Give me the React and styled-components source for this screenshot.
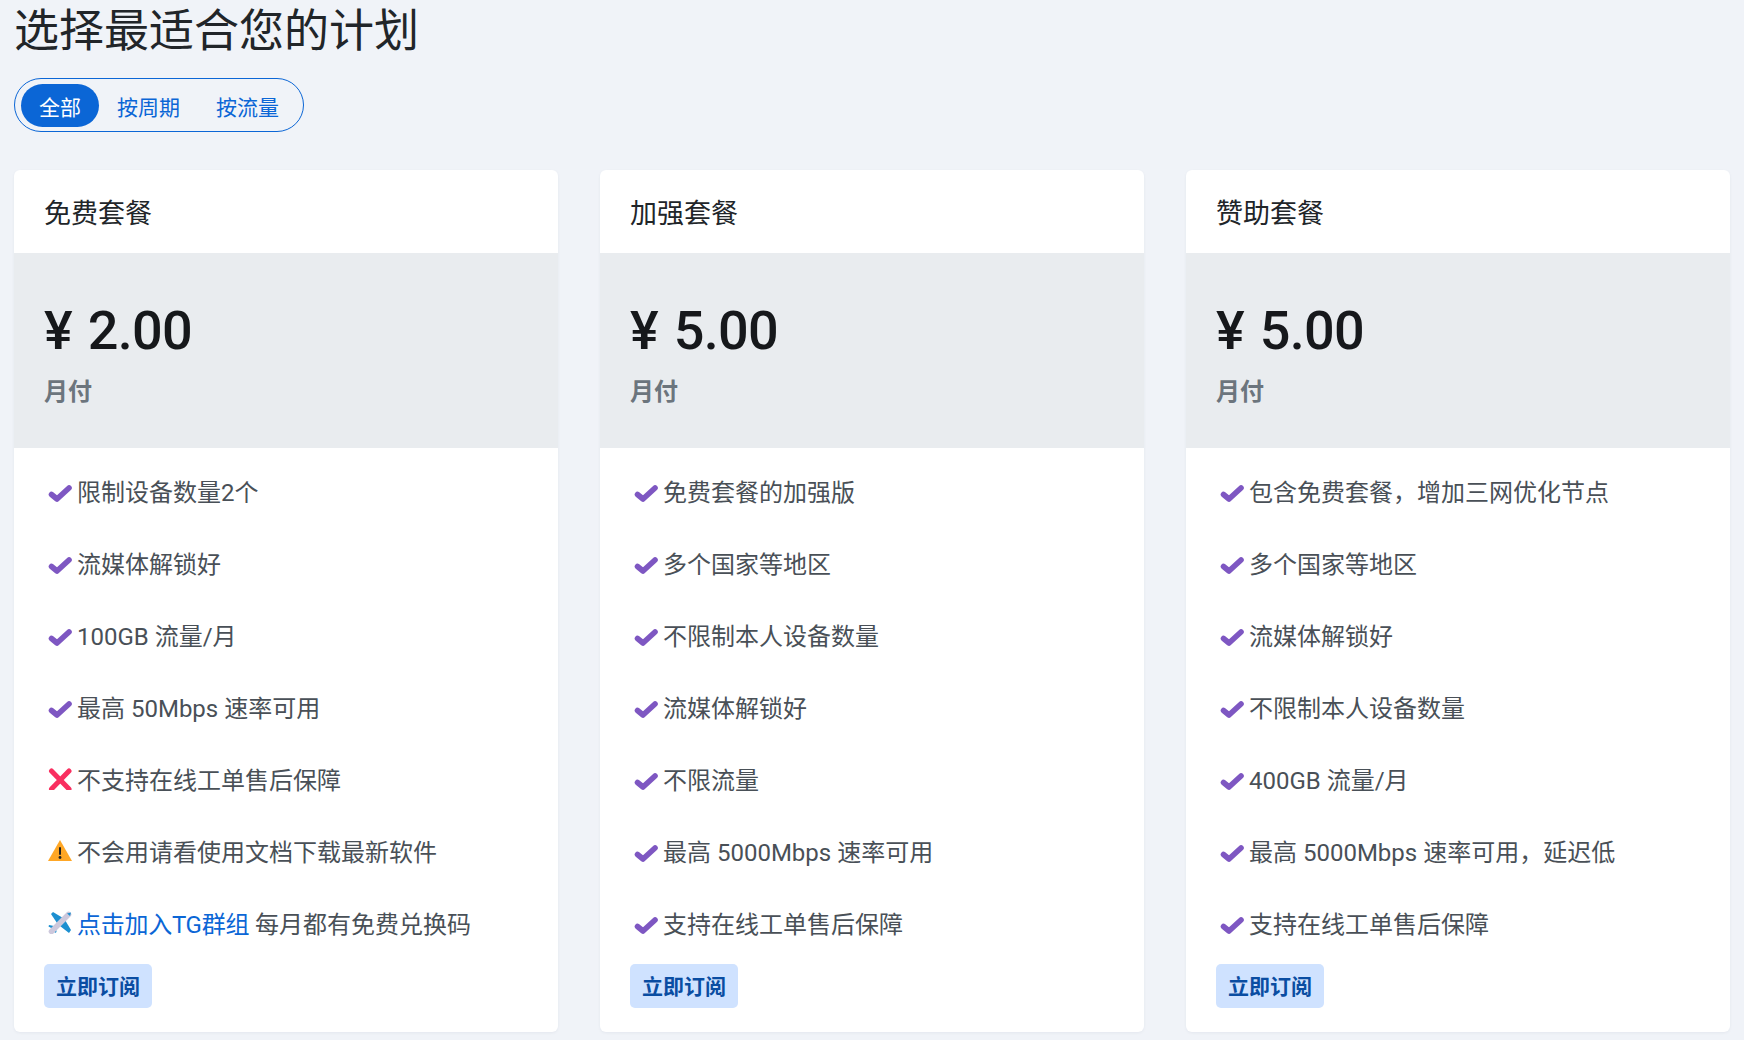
import React from 'react';
import styled, { createGlobalStyle } from 'styled-components';

const GlobalStyle = createGlobalStyle`
  html, body {
    margin: 0;
    padding: 0;
    background: #f0f3f8;
    font-family: Roboto, "Noto Sans CJK SC", sans-serif;
  }
`;

const Page = styled.div`
  width: 1744px;
  height: 1040px;
  box-sizing: border-box;
  padding: 5px 14px 8px;
  overflow: hidden;
`;

const Title = styled.h1`
  margin: 0 0 19px;
  font-size: 45px;
  line-height: 54px;
  font-weight: 400;
  color: #212529;
`;

const Filter = styled.div`
  display: inline-flex;
  align-items: center;
  box-sizing: border-box;
  height: 54px;
  padding: 0 6px;
  border: 1px solid #0b66d6;
  border-radius: 27px;
`;

const FilterItem = styled.button`
  height: 43px;
  padding: 1px 18px 0;
  border: none;
  border-radius: 22px;
  font: inherit;
  font-size: 21px;
  color: ${props => (props.$active ? '#fff' : '#0b66d6')};
  background: ${props => (props.$active ? '#0b66d6' : 'transparent')};
`;

const Grid = styled.div`
  display: grid;
  grid-template-columns: repeat(3, 544px);
  column-gap: 42px;
  margin-top: 38px;
`;

const Card = styled.div`
  height: 862px;
  background: #fff;
  border-radius: 6px;
  box-shadow: 0 1px 3px rgba(30, 50, 90, 0.06);
  overflow: hidden;
`;

const CardHeader = styled.div`
  height: 83px;
  box-sizing: border-box;
  padding: 0 30px;
  display: flex;
  align-items: center;
  font-size: 27px;
  color: #212529;
`;

const PriceBand = styled.div`
  height: 195px;
  box-sizing: border-box;
  padding: 42px 30px 0;
  background: #e9ecef;
`;

const Price = styled.div`
  font-size: 54px;
  line-height: 72px;
  font-weight: 500;
  letter-spacing: -0.7px;
  word-spacing: 3px;
  color: #16181b;
`;

const Period = styled.div`
  margin-top: 9px;
  font-size: 24px;
  line-height: 32px;
  font-weight: 700;
  color: #6c757d;
`;

const Features = styled.ul`
  list-style: none;
  margin: 0;
  padding: 6px 30px 0;
`;

const Feature = styled.li`
  display: flex;
  align-items: center;
  height: 72px;
  font-size: 24px;
  color: #495057;
  white-space: pre;
`;

const IconBox = styled.span`
  display: inline-flex;
  flex: none;
  margin: 0 5px 0 4px;
`;

const Link = styled.a`
  color: #0b66d6;
  letter-spacing: -0.28px;
  text-decoration: none;
`;

const Subscribe = styled.button`
  display: block;
  margin: 6px 0 0 30px;
  width: 108px;
  height: 44px;
  padding: 0 0 2px;
  border: none;
  border-radius: 5px;
  font: inherit;
  font-size: 21px;
  font-weight: 700;
  color: #0a4da2;
  background: #cfe2ff;
`;

const Check = () => (
  <svg width="24" height="24" viewBox="0 0 24 24">
    <path d="M3.5 16.5 L9 21 L21 10" fill="none" stroke="#7e57c2" strokeWidth="5.6" strokeLinecap="round" strokeLinejoin="round" />
  </svg>
);

const Cross = () => (
  <svg width="24" height="24" viewBox="0 -2 24 24">
    <path d="M3.5 3 L21 21 M21 3 L3.5 21" fill="none" stroke="#f92f60" strokeWidth="5" strokeLinecap="round" />
  </svg>
);

const Warning = () => (
  <svg width="24" height="24" viewBox="0 -1 24 24">
    <path d="M12 1 L24 22 H0 Z" fill="#ffa726" />
    <rect x="11" y="8" width="2" height="8" rx="1" fill="#212121" />
    <circle cx="12" cy="18.5" r="1.4" fill="#212121" />
  </svg>
);

const Plane = () => (
  <svg width="24" height="24" viewBox="0 -1 24 24">
    <path d="M15 7 L5 1 L3 3 L9 12 Z" fill="#1c8fd0" />
    <path d="M17 9 L23 19 L21 22 L12 15 Z" fill="#1c8fd0" />
    <path d="M6 15 L1 14 L0.5 15.5 L5 18 L7 22 L8.5 21 L8 17 Z" fill="#1c8fd0" />
    <path d="M3.5 20.5 L20.5 3.5" fill="none" stroke="#cdc8dc" strokeWidth="5.5" strokeLinecap="round" />
    <path d="M19 2.5 L22 5 L23 1.5 Z" fill="#1c8fd0" />
  </svg>
);

const ICONS = { check: Check, cross: Cross, warn: Warning, plane: Plane };

const plans = [
  {
    name: '免费套餐',
    price: '¥ 2.00',
    features: [
      ['check', '限制设备数量2个'],
      ['check', '流媒体解锁好'],
      ['check', '100GB 流量/月'],
      ['check', '最高 50Mbps 速率可用'],
      ['cross', '不支持在线工单售后保障'],
      ['warn', '不会用请看使用文档下载最新软件'],
      ['plane', ' 每月都有免费兑换码', '点击加入TG群组'],
    ],
  },
  {
    name: '加强套餐',
    price: '¥ 5.00',
    features: [
      ['check', '免费套餐的加强版'],
      ['check', '多个国家等地区'],
      ['check', '不限制本人设备数量'],
      ['check', '流媒体解锁好'],
      ['check', '不限流量'],
      ['check', '最高 5000Mbps 速率可用'],
      ['check', '支持在线工单售后保障'],
    ],
  },
  {
    name: '赞助套餐',
    price: '¥ 5.00',
    features: [
      ['check', '包含免费套餐，增加三网优化节点'],
      ['check', '多个国家等地区'],
      ['check', '流媒体解锁好'],
      ['check', '不限制本人设备数量'],
      ['check', '400GB 流量/月'],
      ['check', '最高 5000Mbps 速率可用，延迟低'],
      ['check', '支持在线工单售后保障'],
    ],
  },
];

function PlanCard({ plan }) {
  return (
    <Card>
      <CardHeader>{plan.name}</CardHeader>
      <PriceBand>
        <Price>{plan.price}</Price>
        <Period>月付</Period>
      </PriceBand>
      <Features>
        {plan.features.map(([icon, text, link]) => {
          const Icon = ICONS[icon];
          return (
            <Feature key={text}>
              <IconBox><Icon /></IconBox>
              {link && <Link href="#">{link}</Link>}
              {text}
            </Feature>
          );
        })}
      </Features>
      <Subscribe>立即订阅</Subscribe>
    </Card>
  );
}

export default function App() {
  return (
    <>
      <GlobalStyle />
      <Page>
        <Title>选择最适合您的计划</Title>
        <Filter>
          <FilterItem $active>全部</FilterItem>
          <FilterItem>按周期</FilterItem>
          <FilterItem>按流量</FilterItem>
        </Filter>
        <Grid>
          {plans.map(plan => (
            <PlanCard key={plan.name} plan={plan} />
          ))}
        </Grid>
      </Page>
    </>
  );
}
